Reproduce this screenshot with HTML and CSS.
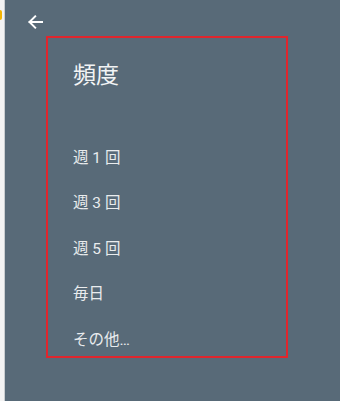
FILE: index.html
```html
<!DOCTYPE html>
<html lang="ja">
<head>
<meta charset="utf-8">
<link rel="stylesheet" href="styles.css">
</head>
<body>
<div class="screen">
  <div class="edge"><span class="edge-mark"></span></div>
  <div class="main">
    <div class="topbar">
      <svg class="back" width="16" height="16" viewBox="0 0 16 16" aria-hidden="true">
        <path d="M15 8H2.5M8.2 2.3L2.5 8l5.7 5.7" fill="none" stroke="#ffffff" stroke-width="2" stroke-linecap="square"/>
      </svg>
    </div>
    <div class="dialog">
      <div class="title">頻度</div>
      <ul class="options">
        <li class="option">週 1 回</li>
        <li class="option">週 3 回</li>
        <li class="option">週 5 回</li>
        <li class="option">毎日</li>
        <li class="option">その他…</li>
      </ul>
    </div>
  </div>
</div>
</body>
</html>
```

FILE: styles.css
```css
html, body {
  margin: 0;
  padding: 0;
  width: 340px;
  height: 401px;
  overflow: hidden;
  background: #586a78;
}
.screen {
  display: flex;
  width: 340px;
  height: 401px;
  font-family: Roboto, "Noto Sans CJK JP", sans-serif;
}
.edge {
  width: 4px;
  flex: none;
  background: #f3f3f3;
  border-right: 1px solid #c9cdd0;
  position: relative;
}
.edge-mark {
  position: absolute;
  left: 0;
  top: 10px;
  width: 2px;
  height: 10px;
  background: #f4b400;
  border-radius: 0 2px 2px 0;
}
.main {
  flex: 1;
  display: flex;
  flex-direction: column;
}
.topbar {
  height: 36px;
  padding-left: 22px;
  box-sizing: border-box;
  padding-top: 14px;
}
.back {
  display: block;
}
.dialog {
  margin-left: 41px;
  width: 242px;
  height: 322px;
  box-sizing: border-box;
  border: 2px solid #e0262d;
  padding: 23px 0 0 25px;
}
.title {
  color: #f2f4f5;
  font-size: 23px;
  line-height: 30px;
}
.options {
  list-style: none;
  margin: 42px 0 0;
  padding: 0;
}
.option {
  height: 45.5px;
  display: flex;
  align-items: center;
  color: #e9ecee;
  font-size: 15.5px;
}
```
